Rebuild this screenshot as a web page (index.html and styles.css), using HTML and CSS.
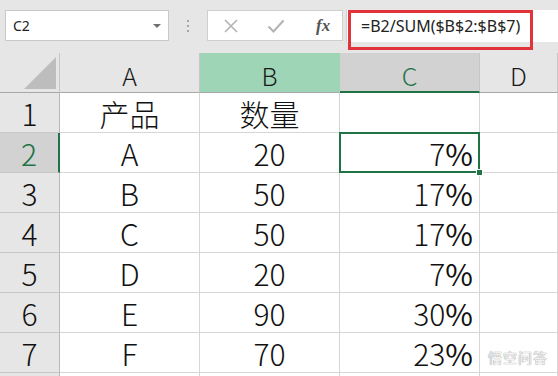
FILE: index.html
```html
<!DOCTYPE html>
<html lang="zh-CN">
<head>
    <meta charset="UTF-8">
    <title>C2</title>
    <link rel="stylesheet" href="styles.css">
</head>
<body>
    <div class="toolbar">
        <div class="namebox">
            <span>C2</span>
            <span class="caret"></span>
        </div>
        <div class="grip"><i></i><i></i><i></i></div>
        <div class="fbuttons">
            <svg class="ico" width="16" height="16" viewBox="0 0 16 16">
                <path d="M2 2 L14 14 M14 2 L2 14" stroke="#b3b3b3" stroke-width="1.6" fill="none"/>
            </svg>
            <svg class="ico" width="18" height="16" viewBox="0 0 18 16">
                <path d="M1.5 8.5 L6.5 13.5 L16.5 2.5" stroke="#b3b3b3" stroke-width="2" fill="none"/>
            </svg>
            <span class="fx">fx</span>
        </div>
        <div class="formula">
            <span>=B2/SUM($B$2:$B$7)</span>
            <div class="mark"></div>
        </div>
    </div>

    <div class="sheet">
        <div class="hd corner"><span class="tri"></span></div>
        <div class="hd col">A</div>
        <div class="hd col col-b">B</div>
        <div class="hd col col-on">C</div>
        <div class="hd col">D</div>

        <div class="hd row">1</div>
        <div class="c">产品</div>
        <div class="c">数量</div>
        <div class="c num"></div>
        <div class="c"></div>

        <div class="hd row row-on">2</div>
        <div class="c">A</div>
        <div class="c">20</div>
        <div class="c num sel">7<span class="pct">%</span></div>
        <div class="c"></div>

        <div class="hd row">3</div>
        <div class="c">B</div>
        <div class="c">50</div>
        <div class="c num">17<span class="pct">%</span></div>
        <div class="c"></div>

        <div class="hd row">4</div>
        <div class="c">C</div>
        <div class="c">50</div>
        <div class="c num">17<span class="pct">%</span></div>
        <div class="c"></div>

        <div class="hd row">5</div>
        <div class="c">D</div>
        <div class="c">20</div>
        <div class="c num">7<span class="pct">%</span></div>
        <div class="c"></div>

        <div class="hd row">6</div>
        <div class="c">E</div>
        <div class="c">90</div>
        <div class="c num">30<span class="pct">%</span></div>
        <div class="c"></div>

        <div class="hd row">7</div>
        <div class="c">F</div>
        <div class="c">70</div>
        <div class="c num">23<span class="pct">%</span></div>
        <div class="c"></div>

        <div class="hd row last"></div>
        <div class="c last"></div>
        <div class="c last"></div>
        <div class="c last"></div>
        <div class="c last"></div>
    </div>

    <div class="watermark">悟空问答</div>
</body>
</html>
```

FILE: styles.css
```css
body {
    margin: 0;
    width: 558px;
    height: 376px;
    overflow: hidden;
    position: relative;
    background: #fff;
    font-family: "Noto Sans CJK SC", "Noto Sans", sans-serif;
}
.toolbar {
    height: 53px;
    box-sizing: border-box;
    padding: 10px 0 0 5px;
    background: #e6e6e6;
    display: flex;
    align-items: flex-start;
}
.namebox {
    width: 164px;
    height: 31px;
    box-sizing: border-box;
    background: #fff;
    border: 1px solid #c8c8c8;
    display: flex;
    align-items: center;
    justify-content: space-between;
    padding: 0 7px 0 7px;
    font-family: "Noto Sans", sans-serif;
    font-size: 14px;
    color: #222;
}
.caret {
    width: 0;
    height: 0;
    border-left: 4px solid transparent;
    border-right: 4px solid transparent;
    border-top: 4px solid #707070;
}
.grip {
    width: 38px;
    height: 31px;
    display: flex;
    flex-direction: column;
    align-items: center;
    justify-content: center;
    gap: 3px;
}
.grip i {
    width: 2px;
    height: 2px;
    background: #a6a6a6;
}
.fbuttons {
    width: 136px;
    height: 31px;
    box-sizing: border-box;
    background: #fff;
    border: 1px solid #cfcfcf;
    display: flex;
    align-items: center;
    padding-left: 15px;
}
.fbuttons .ico {
    margin-right: 28px;
}
.fbuttons .ico + .ico {
    margin-right: 31px;
}
.fx {
    font-family: "Liberation Serif", serif;
    font-style: italic;
    font-weight: bold;
    font-size: 17px;
    color: #555;
}
.formula {
    flex: 1;
    height: 32px;
    margin-left: 3px;
    background: #fff;
    border-left: 1px solid #cfcfcf;
    position: relative;
    display: flex;
    align-items: center;
    padding-left: 14px;
    font-family: "Noto Sans", sans-serif;
    font-size: 16px;
    color: #222;
}
.mark {
    position: absolute;
    left: 1px;
    top: 0;
    width: 185px;
    height: 40px;
    box-sizing: border-box;
    border: 3px solid #e2333b;
}
.sheet {
    display: grid;
    grid-template-columns: 60px 140px 140px 140px 1fr;
    grid-template-rows: repeat(8, 40px) 3px;
}
.sheet > div {
    box-sizing: border-box;
    border-right: 1px solid #d6d6d6;
    border-bottom: 1px solid #d6d6d6;
    line-height: 39px;
    text-align: center;
    white-space: nowrap;
    color: #111;
}
.sheet > .last {
    border-bottom: none;
}
.c {
    font-size: 30px;
    font-weight: 300;
    padding-top: 1px;
}
.c.num {
    text-align: right;
    padding-right: 6px;
}
.pct {
    font-family: "Liberation Sans Narrow", "Noto Sans CJK SC", sans-serif;
    font-weight: normal;
}
.sel {
    position: relative;
}
.sel::after {
    content: "";
    position: absolute;
    left: -1px;
    top: -1px;
    right: -1px;
    bottom: -1px;
    border: 2px solid #217346;
}
.sel::before {
    content: "";
    position: absolute;
    right: -4px;
    bottom: -4px;
    width: 5px;
    height: 5px;
    background: #217346;
    border: 1px solid #fff;
    z-index: 1;
}
.hd {
    background: #e6e6e6;
}
.sheet > .col {
    font-size: 25px;
    font-weight: 300;
    padding-top: 3px;
    border-right-color: #c6c6c6;
    border-bottom-color: #a8a8a8;
    color: #1a1a1a;
}
.sheet > .col-b {
    background: #9fd5b7;
    border-right-color: #9fd5b7;
}
.sheet > .col-on {
    background: #d2d2d2;
    color: #217346;
    border-bottom: 2px solid #217346;
}
.sheet > .row {
    font-size: 30px;
    font-weight: 300;
    padding-top: 1px;
    border-right-color: #b8b8b8;
    border-bottom-color: #c8c8c8;
}
.sheet > .row-on {
    background: #d2d2d2;
    color: #217346;
    border-right: 2px solid #217346;
}
.sheet > .corner {
    border-right-color: #c6c6c6;
    border-bottom-color: #a8a8a8;
    position: relative;
}
.tri {
    position: absolute;
    right: 3px;
    bottom: 3px;
    width: 32px;
    height: 32px;
    background: #bdbdbd;
    clip-path: polygon(100% 0, 100% 100%, 0 100%);
}
.watermark {
    position: absolute;
    right: 10px;
    bottom: 9px;
    font-size: 14px;
    color: rgba(255, 255, 255, 0.9);
    text-shadow: 0 0 1px #999, 0 0 1px #999;
    letter-spacing: 1px;
}
```
